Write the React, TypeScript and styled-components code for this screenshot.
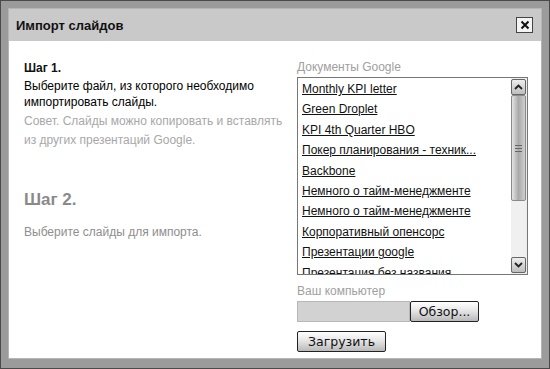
import React from 'react'
import styled, { createGlobalStyle } from 'styled-components'

const GlobalStyle = createGlobalStyle`
  html, body {
    margin: 0;
    padding: 0;
    background: #8c8c8c;
  }
  * { box-sizing: border-box; }
`

const Frame = styled.div`
  width: 550px;
  height: 369px;
  border: 1px solid #4a4a4a;
  background: #9b9b9b;
  padding: 7px 7px 9px 7px;
  display: flex;
  font-family: "Liberation Sans", Arial, sans-serif;
`

const Dialog = styled.div`
  flex: 1;
  display: flex;
  flex-direction: column;
  background: #fff;
  border: 1px solid #b5b5b5;
`

const TitleBar = styled.div`
  height: 32px;
  background: #c9c9c9;
  display: flex;
  align-items: center;
  justify-content: space-between;
  padding: 0 8px 0 7px;
`

const Title = styled.div`
  font-size: 13px;
  font-weight: bold;
  color: #111;
`

const CloseButton = styled.div`
  width: 17px;
  height: 16px;
  border: 1px solid #444;
  background: #f4f4f4;
  display: flex;
  align-items: center;
  justify-content: center;
`

const Body = styled.div`
  flex: 1;
  display: grid;
  grid-template-columns: minmax(0, 1fr) 231px;
  padding: 19px 13px 0 15px;
  column-gap: 20px;
`

const LeftCol = styled.div`
  display: flex;
  flex-direction: column;
  white-space: nowrap;
`

const StepTitle = styled.div<{ $muted?: boolean }>`
  font-weight: bold;
  font-size: ${p => (p.$muted ? '17px' : '12px')};
  color: ${p => (p.$muted ? '#8a8a8a' : '#111')};
  line-height: ${p => (p.$muted ? '20px' : '16px')};
  margin-top: ${p => (p.$muted ? '40px' : '0')};
  margin-bottom: ${p => (p.$muted ? '15px' : '2px')};
`

const Text = styled.div`
  font-size: 12px;
  line-height: 16px;
  color: #000;
`

const Hint = styled.div`
  font-size: 12px;
  line-height: 19px;
  color: #a8a8a8;
  margin-top: 2px;
`

const MutedText = styled.div`
  font-size: 12px;
  line-height: 15px;
  color: #8e8e8e;
`

const RightCol = styled.div`
  display: flex;
  flex-direction: column;
`

const Label = styled.div`
  font-size: 12px;
  line-height: 15px;
  color: #a0a0a0;
  margin-bottom: 2px;
`

const ListBox = styled.div`
  height: 198px;
  border: 1px solid #777;
  display: flex;
  background: #fff;
`

const Items = styled.div`
  flex: 1;
  overflow: hidden;
  padding: 1px 0 0 4px;
`

const Item = styled.div`
  font-size: 12px;
  line-height: 20.4px;
  color: #111;
  text-decoration: underline;
  white-space: nowrap;
`

const ScrollBar = styled.div`
  width: 16px;
  display: flex;
  flex-direction: column;
  padding: 1px 1px 1px 0;
  background: #ececec;
`

const ArrowButton = styled.div`
  height: 16px;
  border: 1px solid #666;
  border-radius: 2px;
  background: linear-gradient(#eeeeee, #bdbdbd);
  display: flex;
  align-items: center;
  justify-content: center;
`

const Track = styled.div`
  flex: 1;
  display: flex;
  flex-direction: column;
  background: #f0f0f0;
`

const Thumb = styled.div`
  height: 106px;
  border: 1px solid #8a8a8a;
  border-radius: 2px;
  background: linear-gradient(90deg, #e3e3e3, #a9a9a9 50%, #cfcfcf);
  display: flex;
  align-items: center;
  justify-content: center;
`

const Grip = styled.div`
  width: 7px;
  height: 7px;
  border-top: 1px solid #666;
  border-bottom: 1px solid #666;
  position: relative;
  &::after {
    content: '';
    position: absolute;
    left: 0;
    right: 0;
    top: 2px;
    border-top: 1px solid #666;
  }
`

const SubLabel = styled(Label)`
  margin-top: 9px;
  margin-bottom: 2px;
`

const FileRow = styled.div`
  display: flex;
  height: 21px;
`

const FileInput = styled.div`
  width: 113px;
  background: #d2d2d2;
  border: 1px solid #b8b8b8;
`

const Button = styled.div`
  height: 21px;
  padding: 0 6px;
  border: 1px solid #222;
  border-radius: 2px;
  background: linear-gradient(#ffffff, #e6e6e6 45%, #b9b9b9);
  font-family: "DejaVu Sans", Verdana, sans-serif;
  font-size: 12.5px;
  color: #111;
  display: flex;
  align-items: center;
  justify-content: center;
`

const BrowseButton = styled(Button)`
  width: 69px;
`

const UploadButton = styled(Button)`
  margin-top: 9px;
  width: 89px;
`

const Chevron = ({ up }: { up?: boolean }) => (
  <svg width="9" height="6" viewBox="0 0 9 6">
    <path
      d={up ? 'M1 5 L4.5 1.5 L8 5' : 'M1 1 L4.5 4.5 L8 1'}
      fill="none"
      stroke="#222"
      strokeWidth="1.8"
    />
  </svg>
)

const docs = [
  'Monthly KPI letter',
  'Green Droplet',
  'KPI 4th Quarter HBO',
  'Покер планирования - техник...',
  'Backbone',
  'Немного о тайм-менеджменте',
  'Немного о тайм-менеджменте',
  'Корпоративный опенсорс',
  'Презентации google',
  'Презентация без названия',
]

export default function App() {
  return (
    <>
      <GlobalStyle />
      <Frame>
        <Dialog>
          <TitleBar>
            <Title>Импорт слайдов</Title>
            <CloseButton>
              <svg width="10" height="10" viewBox="0 0 10 10">
                <path d="M1.5 1.5 L8.5 8.5 M8.5 1.5 L1.5 8.5" stroke="#111" strokeWidth="2" />
              </svg>
            </CloseButton>
          </TitleBar>
          <Body>
            <LeftCol>
              <StepTitle>Шаг 1.</StepTitle>
              <Text>
                Выберите файл, из которого необходимо
                <br />
                импортировать слайды.
              </Text>
              <Hint>
                Совет. Слайды можно копировать и вставлять
                <br />
                из других презентаций Google.
              </Hint>
              <StepTitle $muted>Шаг 2.</StepTitle>
              <MutedText>Выберите слайды для импорта.</MutedText>
            </LeftCol>
            <RightCol>
              <Label>Документы Google</Label>
              <ListBox>
                <Items>
                  {docs.map((d, i) => (
                    <Item key={i}>{d}</Item>
                  ))}
                </Items>
                <ScrollBar>
                  <ArrowButton>
                    <Chevron up />
                  </ArrowButton>
                  <Track>
                    <Thumb>
                      <Grip />
                    </Thumb>
                  </Track>
                  <ArrowButton>
                    <Chevron />
                  </ArrowButton>
                </ScrollBar>
              </ListBox>
              <SubLabel>Ваш компьютер</SubLabel>
              <FileRow>
                <FileInput />
                <BrowseButton>Обзор...</BrowseButton>
              </FileRow>
              <UploadButton>Загрузить</UploadButton>
            </RightCol>
          </Body>
        </Dialog>
      </Frame>
    </>
  )
}
